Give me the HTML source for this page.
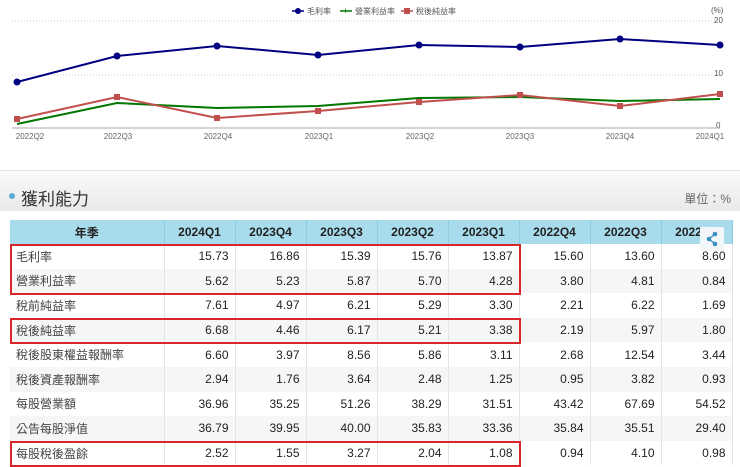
<!DOCTYPE html><html><head><meta charset="utf-8"><style>
body{margin:0;width:740px;height:467px;overflow:hidden;background:#fff;font-family:"Liberation Sans","Noto Sans CJK TC",sans-serif;position:relative}
.band{position:absolute;left:0;top:170px;width:740px;height:40px;background:linear-gradient(#fafafa,#e9e9e9);border-top:1px solid #e2e2e2}
.title{position:absolute;left:21px;top:185px;font-size:17px;color:#333}
.dot{position:absolute;left:9px;top:193px;width:6px;height:6px;border-radius:50%;background:#5aa9d6}
.unit{position:absolute;right:9px;top:190px;font-size:12px;color:#666}
table{position:absolute;left:10px;top:220px;border-collapse:collapse;table-layout:fixed;width:722px;font-size:12px;color:#222}
td,th{height:24.6px;padding:0 6px;border-right:1px solid #e4e4e4;box-sizing:border-box}
th{background:#a8dcec;font-weight:bold;height:24px;border-right:1px solid #8ccbe0}
td{text-align:right}td:first-child{text-align:left;color:#444}
tr:nth-child(odd) td{background:#f6f6f6}
.box{position:absolute;border:2px solid #d9262b;box-sizing:border-box}
.share{position:absolute;left:700px;top:227px;width:24px;height:24px;background:#f3f6f8;border-radius:2px}
</style></head><body>
<svg width="740" height="160" style="position:absolute;left:0;top:0" font-family="Liberation Sans, Noto Sans CJK TC, sans-serif">
<g font-size="8" fill="#555">
<circle cx="298" cy="11" r="3" fill="#000080"/><line x1="292" y1="11" x2="304" y2="11" stroke="#000080" stroke-width="1.5"/><text x="307" y="14">毛利率</text>
<line x1="340" y1="11" x2="352" y2="11" stroke="#007800" stroke-width="1.5"/><text x="343" y="14" fill="#007800" font-size="9">+</text><text x="355" y="14">營業利益率</text>
<line x1="401" y1="11" x2="413" y2="11" stroke="#c0504d" stroke-width="1.5"/><rect x="404" y="8" width="6" height="6" fill="#c0504d"/><text x="416" y="14">稅後純益率</text>
<text x="711" y="13">(%)</text><text x="714" y="23">20</text><text x="714" y="76">10</text><text x="716" y="128">0</text>
</g>
<line x1="12" y1="21" x2="720" y2="21" stroke="#ccc" stroke-dasharray="1,2"/>
<line x1="12" y1="75" x2="720" y2="75" stroke="#ccc" stroke-dasharray="1,2"/>
<line x1="12" y1="128" x2="720" y2="128" stroke="#aaa"/>
<g font-size="8" fill="#666" text-anchor="middle">
<text x="30" y="139">2022Q2</text><text x="118" y="139">2022Q3</text><text x="218" y="139">2022Q4</text><text x="319" y="139">2023Q1</text><text x="420" y="139">2023Q2</text><text x="520" y="139">2023Q3</text><text x="620" y="139">2023Q4</text><text x="710" y="139">2024Q1</text>
</g>
<polyline fill="none" stroke="#000080" stroke-width="2" points="17,82 117,56 217,46 318,55 419,45 520,47 620,39 720,45"/>
<g fill="#000080"><circle cx="17" cy="82" r="3.5"/><circle cx="117" cy="56" r="3.5"/><circle cx="217" cy="46" r="3.5"/><circle cx="318" cy="55" r="3.5"/><circle cx="419" cy="45" r="3.5"/><circle cx="520" cy="47" r="3.5"/><circle cx="620" cy="39" r="3.5"/><circle cx="720" cy="45" r="3.5"/></g>
<polyline fill="none" stroke="#007800" stroke-width="2" points="17,124 117,103 217,108 318,106 419,98 520,97 620,101 720,99"/>
<polyline fill="none" stroke="#c0504d" stroke-width="2" points="17,119 117,97 217,118 318,111 419,102 520,95 620,106 720,94"/>
<g fill="#c0504d"><rect x="14" y="116" width="6" height="6"/><rect x="114" y="94" width="6" height="6"/><rect x="214" y="115" width="6" height="6"/><rect x="315" y="108" width="6" height="6"/><rect x="416" y="99" width="6" height="6"/><rect x="517" y="92" width="6" height="6"/><rect x="617" y="103" width="6" height="6"/><rect x="717" y="91" width="6" height="6"/></g>
</svg>
<div class="band"></div><div class="dot"></div><div class="title">獲利能力</div><div class="unit">單位：%</div>
<table>
<colgroup><col style="width:154px"><col span="7" style="width:71px"><col style="width:71px"></colgroup>
<tr><th>年季</th><th>2024Q1</th><th>2023Q4</th><th>2023Q3</th><th>2023Q2</th><th>2023Q1</th><th>2022Q4</th><th>2022Q3</th><th>2022Q2</th></tr>
<tr><td>毛利率</td><td>15.73</td><td>16.86</td><td>15.39</td><td>15.76</td><td>13.87</td><td>15.60</td><td>13.60</td><td>8.60</td></tr>
<tr><td>營業利益率</td><td>5.62</td><td>5.23</td><td>5.87</td><td>5.70</td><td>4.28</td><td>3.80</td><td>4.81</td><td>0.84</td></tr>
<tr><td>稅前純益率</td><td>7.61</td><td>4.97</td><td>6.21</td><td>5.29</td><td>3.30</td><td>2.21</td><td>6.22</td><td>1.69</td></tr>
<tr><td>稅後純益率</td><td>6.68</td><td>4.46</td><td>6.17</td><td>5.21</td><td>3.38</td><td>2.19</td><td>5.97</td><td>1.80</td></tr>
<tr><td>稅後股東權益報酬率</td><td>6.60</td><td>3.97</td><td>8.56</td><td>5.86</td><td>3.11</td><td>2.68</td><td>12.54</td><td>3.44</td></tr>
<tr><td>稅後資產報酬率</td><td>2.94</td><td>1.76</td><td>3.64</td><td>2.48</td><td>1.25</td><td>0.95</td><td>3.82</td><td>0.93</td></tr>
<tr><td>每股營業額</td><td>36.96</td><td>35.25</td><td>51.26</td><td>38.29</td><td>31.51</td><td>43.42</td><td>67.69</td><td>54.52</td></tr>
<tr><td>公告每股淨值</td><td>36.79</td><td>39.95</td><td>40.00</td><td>35.83</td><td>33.36</td><td>35.84</td><td>35.51</td><td>29.40</td></tr>
<tr><td>每股稅後盈餘</td><td>2.52</td><td>1.55</td><td>3.27</td><td>2.04</td><td>1.08</td><td>0.94</td><td>4.10</td><td>0.98</td></tr>
</table>
<div class="share"><svg width="24" height="24"><g fill="#3b8fc2"><circle cx="15" cy="7" r="2.3"/><circle cx="9" cy="12" r="2.3"/><circle cx="15" cy="17" r="2.3"/></g><path d="M15 7L9 12L15 17" stroke="#3b8fc2" stroke-width="1.3" fill="none"/></svg></div>
<div class="box" style="left:10px;top:244px;width:511px;height:51px"></div>
<div class="box" style="left:10px;top:318px;width:511px;height:26px"></div>
<div class="box" style="left:10px;top:441px;width:511px;height:26px"></div>
</body></html>
